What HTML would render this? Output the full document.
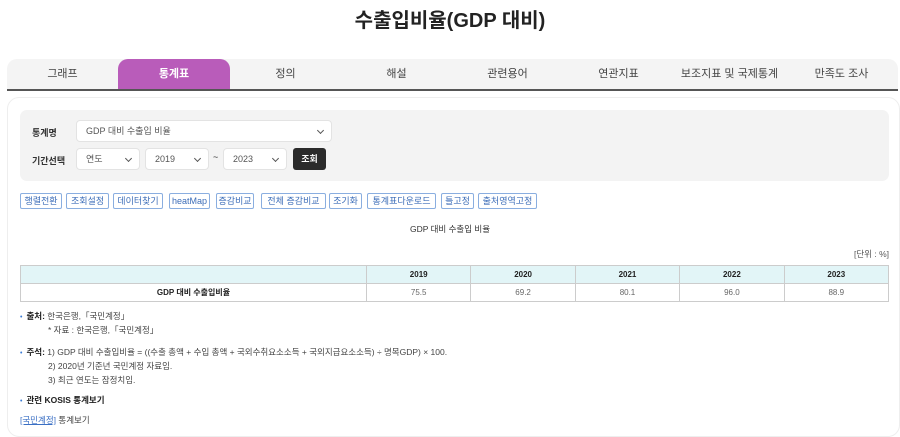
<!DOCTYPE html>
<html><head><meta charset="utf-8"><style>
*{margin:0;padding:0;box-sizing:border-box}
body{width:900px;height:434px;overflow:hidden;background:#fff;font-family:"Liberation Sans","Noto Sans CJK KR",sans-serif;color:#333;position:relative;font-size:9px}
.a{position:absolute}
h1{position:absolute;left:0;width:900px;top:4px;text-align:center;font-size:20px;font-weight:bold;color:#222}
.tabs{left:7px;top:59px;width:891px;height:32px;background:#f4f4f4;border-radius:10px 10px 0 0;border-bottom:2px solid #555}
.tab{position:absolute;top:0;height:30px;line-height:31px;text-align:center;font-size:11px;color:#444}
.tab.on{background:#b95cba;color:#fff;font-weight:bold;border-radius:10px 10px 0 0;top:0}
.box{left:7px;top:97px;width:893px;height:340px;border:1px solid #eee;border-radius:12px}
.panel{left:20px;top:110px;width:869px;height:71px;background:#f3f3f3;border-radius:7px}
.lbl{font-weight:bold;font-size:9px;color:#333}
.sel{position:absolute;height:22px;background:#fff;border:1px solid #e3e3e3;border-radius:4px;font-size:9px;color:#555;line-height:20px;padding-left:9px}
.sel:after{content:"";position:absolute;right:8px;top:7px;width:4px;height:4px;border-right:1.2px solid #555;border-bottom:1.2px solid #555;transform:rotate(45deg)}
.btn{position:absolute;top:193px;height:16px;border:1px solid #8aaee0;border-radius:2px;font-size:9px;color:#3c6db8;text-align:center;line-height:14px}
table{position:absolute;left:20px;top:265px;width:869px;border-collapse:collapse;font-size:8px}
td,th{border:1px solid #ccc;height:18px;text-align:center}
th{background:#e2f5f7;font-weight:bold;color:#222}
td{color:#666}
.n{position:absolute;font-size:8.5px;color:#444}
.n b{color:#222}
.dot{color:#3a7bd5;font-size:7px;margin-right:4px}
</style></head><body>
<h1>수출입비율(GDP 대비)</h1>
<div class="a tabs">
<div class="tab" style="left:0;width:111px">그래프</div>
<div class="tab on" style="left:111px;width:112px">통계표</div>
<div class="tab" style="left:223px;width:111px">정의</div>
<div class="tab" style="left:334px;width:111px">해설</div>
<div class="tab" style="left:445px;width:111px">관련용어</div>
<div class="tab" style="left:556px;width:111px">연관지표</div>
<div class="tab" style="left:667px;width:111px">보조지표 및 국제통계</div>
<div class="tab" style="left:778px;width:113px">만족도 조사</div>
</div>
<div class="a box"></div>
<div class="a panel"></div>
<div class="a lbl" style="left:32px;top:126px">통계명</div>
<div class="a lbl" style="left:32px;top:154px">기간선택</div>
<div class="sel" style="left:76px;top:120px;width:256px">GDP 대비 수출입 비율</div>
<div class="sel" style="left:76px;top:148px;width:64px">연도</div>
<div class="sel" style="left:145px;top:148px;width:64px">2019</div>
<div class="a" style="left:213px;top:152px;font-size:9px">~</div>
<div class="sel" style="left:223px;top:148px;width:64px">2023</div>
<div class="a" style="left:293px;top:148px;width:33px;height:22px;background:#2b2b2b;color:#fff;border-radius:3px;text-align:center;line-height:22px;font-size:9px;font-weight:bold">조회</div>
<div class="btn" style="left:20px;width:42px">행렬전환</div>
<div class="btn" style="left:66px;width:43px">조회설정</div>
<div class="btn" style="left:113px;width:50px">데이터찾기</div>
<div class="btn" style="left:169px;width:41px">heatMap</div>
<div class="btn" style="left:216px;width:38px">증감비교</div>
<div class="btn" style="left:261px;width:65px">전체 증감비교</div>
<div class="btn" style="left:329px;width:33px">조기화</div>
<div class="btn" style="left:367px;width:69px">통계표다운로드</div>
<div class="btn" style="left:441px;width:33px">틀고정</div>
<div class="btn" style="left:478px;width:59px">출처영역고정</div>
<div class="a" style="left:0;width:900px;top:223px;text-align:center;font-size:8.5px;color:#333">GDP 대비 수출입 비율</div>
<div class="a" style="right:11px;top:248px;font-size:8.5px;color:#555">[단위 : %]</div>
<table>
<tr><th style="width:346px"></th><th>2019</th><th>2020</th><th>2021</th><th>2022</th><th>2023</th></tr>
<tr><td style="color:#222;font-weight:bold">GDP 대비 수출입비율</td><td>75.5</td><td>69.2</td><td>80.1</td><td>96.0</td><td>88.9</td></tr>
</table>
<div class="n" style="left:20px;top:310px"><span class="dot">•</span><b>출처:</b> 한국은행,「국민계정」</div>
<div class="n" style="left:48px;top:324px">* 자료 : 한국은행,「국민계정」</div>
<div class="n" style="left:20px;top:346px"><span class="dot">•</span><b>주석:</b> 1) GDP 대비 수출입비율 = ((수출 총액 + 수입 총액 + 국외수취요소소득 + 국외지급요소소득) ÷ 명목GDP) × 100.</div>
<div class="n" style="left:48px;top:360px">2) 2020년 기준년 국민계정 자료임.</div>
<div class="n" style="left:48px;top:374px">3) 최근 연도는 잠정치임.</div>
<div class="n" style="left:20px;top:394px"><span class="dot">•</span><b>관련 KOSIS 통계보기</b></div>
<div class="n" style="left:20px;top:414px"><span style="color:#3a6fc4;text-decoration:underline">[국민계정]</span> 통계보기</div>
</body></html>
